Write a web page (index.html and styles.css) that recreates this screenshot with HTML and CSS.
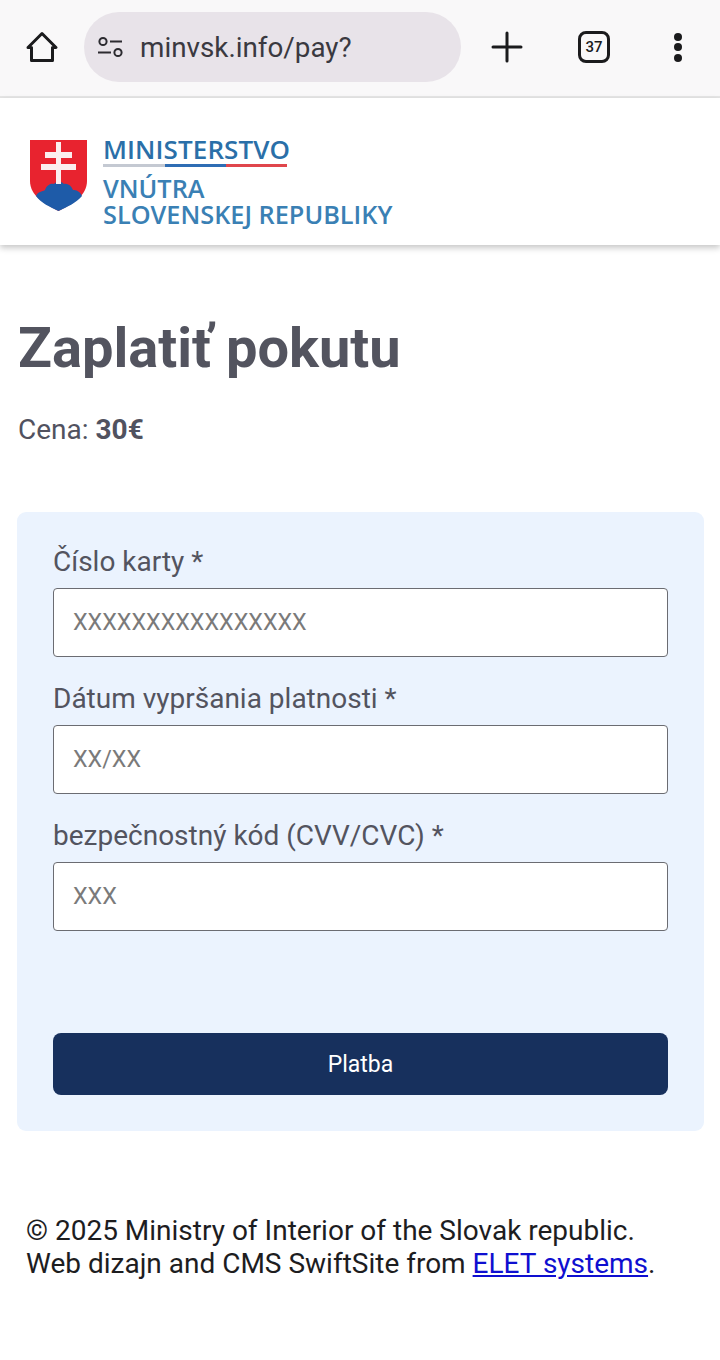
FILE: index.html
```html
<!DOCTYPE html>
<html lang="sk">
<head>
<meta charset="utf-8">
<title>Zaplatiť pokutu</title>
<link rel="stylesheet" href="styles.css">
</head>
<body>
<div class="toolbar">
  <svg class="home" width="36" height="36" viewBox="0 0 36 36"><path d="M18 4.5 L32 18.5 H28.5 V31.5 H7.5 V18.5 H4 Z" fill="none" stroke="#1b1b1d" stroke-width="3" stroke-linejoin="round"/></svg>
  <div class="omnibox">
    <svg class="tune" width="28" height="24" viewBox="0 0 28 24"><circle cx="6" cy="6.5" r="3.6" fill="none" stroke="#2c2b30" stroke-width="2"/><path d="M13 6.5 H25 M1 17.5 H14" stroke="#2c2b30" stroke-width="2"/><circle cx="21" cy="17.5" r="3.6" fill="none" stroke="#2c2b30" stroke-width="2"/></svg>
    <span class="url">minvsk.info/pay?</span>
  </div>
  <svg class="plus" width="32" height="32" viewBox="0 0 32 32"><path d="M16 2 V30 M2 16 H30" stroke="#1b1b1d" stroke-width="3" stroke-linecap="round"/></svg>
  <div class="tabs">37</div>
  <div class="dots"><i></i><i></i><i></i></div>
</div>

<header class="site-head">
  <div class="logo">
    <svg class="crest" width="59" height="73" viewBox="0 0 59 73">
      <path d="M1 1 H58 V42 C58 57 43 65 29.5 72 C16 65 1 57 1 42 Z" fill="#e8232f"/>
      <path d="M7 57 C9 52 13 53 16 51 C18 45 23 44 25 45 C28 42 32 42 35 45 C38 44 42 46 44 51 C47 51 51 52 53 57 C47 64 38 68 29.5 72 C21 68 12 64 7 57 Z" fill="#1e5ba8"/>
      <path d="M27 3 H32 V13 H43 V19 H32 V25 H47 V31 H32 V45 H27 V31 H12 V25 H27 V19 H16 V13 H27 Z" fill="#fbeeee"/>
    </svg>
    <div class="wordmark">
      <div class="wm-top">MINISTERSTVO</div>
      <div class="rule"><i class="r1"></i><i class="r2"></i><i class="r3"></i></div>
      <div class="wm-line">VNÚTRA</div>
      <div class="wm-line">SLOVENSKEJ REPUBLIKY</div>
    </div>
  </div>
</header>

<main class="content">
  <h1>Zaplatiť pokutu</h1>
  <p class="price">Cena: <b>30€</b></p>
  <form class="card">
    <label class="field"><span>Číslo karty *</span><input placeholder="XXXXXXXXXXXXXXXX"></label>
    <label class="field"><span>Dátum vypršania platnosti *</span><input placeholder="XX/XX"></label>
    <label class="field"><span>bezpečnostný kód (CVV/CVC) *</span><input placeholder="XXX"></label>
    <button type="button">Platba</button>
  </form>
</main>

<footer class="foot">
  © 2025 Ministry of Interior of the Slovak republic.<br>
  Web dizajn and CMS SwiftSite from <a href="#">ELET systems</a>.
</footer>
</body>
</html>
```
FILE: styles.css
```css
* { box-sizing: border-box; }
html, body { margin: 0; padding: 0; background: #fff; }
body { font-family: Roboto, "Liberation Sans", sans-serif; color: #51525f; width: 720px; height: 1360px; overflow: hidden; }

.toolbar { height: 98px; background: #f9f8f9; border-bottom: 2px solid #e6e6e6; display: flex; align-items: center; position: relative; padding: 0 0 2px 24px; }
.home { flex: none; }
.omnibox { width: 377px; height: 70px; margin-left: 24px; background: #e8e3e9; border-radius: 35px; display: flex; align-items: center; padding-left: 13px; flex: none; }
.tune { flex: none; }
.url { font-size: 27.8px; margin-left: 15px; color: #3a3940; }
.plus { margin-left: 30px; flex: none; }
.tabs { width: 32px; height: 32px; margin-left: 55px; border: 3px solid #1b1b1d; border-radius: 8px; font-size: 15px; font-weight: 500; color: #1b1b1d; display: flex; align-items: center; justify-content: center; flex: none; }
.dots { margin-left: 64px; display: flex; flex-direction: column; gap: 2.5px; flex: none; }
.dots i { display: block; width: 8px; height: 8px; border-radius: 50%; background: #1b1b1d; }

.site-head { height: 147px; background: #fff; box-shadow: 0 3px 6px rgba(0,0,0,.22); padding: 41px 0 0 29px; position: relative; }
.logo { display: flex; gap: 15px; }
.crest { flex: none; }
.wordmark { font-family: "Open Sans", sans-serif; font-weight: 600; margin-top: -5px; }
.wm-top { font-size: 26px; line-height: 30px; color: #2a6fa8; letter-spacing: .1px; }
.rule { display: flex; height: 3px; width: 184px; margin-bottom: 8px; }
.rule i { display: block; height: 3px; }
.r1 { width: 62px; background: #c4c9d2; }
.r2 { width: 61px; background: #2e6db4; }
.r3 { width: 61px; background: #e0464c; }
.wm-line { font-size: 25.3px; line-height: 26px; color: #3a80b4; white-space: nowrap; }

.content { padding: 0 16px 0 17px; }
h1 { margin: 0; padding-top: 68px; padding-left: 1px; font-size: 56px; line-height: 70px; font-weight: 700; color: #53545f; }
.price { margin: 30px 0 0 1px; font-size: 28px; line-height: 34px; }
.price b { font-weight: 700; }

.card { margin-top: 65px; height: 619px; background: #ebf3fe; border-radius: 9px; padding: 32px 36px 0; display: flex; flex-direction: column; }
.field { display: block; margin-bottom: 24px; }
.field span { display: block; font-size: 28px; line-height: 36px; height: 44px; color: #53545f; }
.field input { display: block; width: 100%; height: 69px; border: 1px solid #6b6c72; border-radius: 4px; background: #fff; padding: 0 19px 2px; font: 23.3px Roboto, sans-serif; color: #333; outline: none; }
.field input::placeholder { color: #7a7a7a; opacity: 1; }
button { margin-top: 78px; height: 62px; border: 0; border-radius: 8px; background: #17305d; color: #fff; font: 23px Roboto, sans-serif; }

.foot { margin: 83px 0 0 26px; font-size: 28px; line-height: 33px; color: #1d1d1f; white-space: nowrap; }
.foot a { color: #0f0fd0; text-decoration: underline; }
```
